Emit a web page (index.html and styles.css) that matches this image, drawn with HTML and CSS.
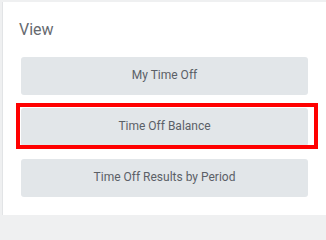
FILE: index.html
```html
<!DOCTYPE html>
<html>
<head>
<meta charset="utf-8">
<link rel="stylesheet" href="styles.css">
</head>
<body>
<div class="card">
  <h2 class="title">View</h2>
  <div class="list">
    <button class="btn">My Time Off</button>
    <button class="btn">Time Off Balance</button>
    <button class="btn">Time Off Results by Period</button>
  </div>
  <div class="highlight"></div>
</div>
</body>
</html>
```

FILE: styles.css
```css
html, body {
  margin: 0;
  padding: 0;
}
body {
  background: #eff0f1;
  padding-top: 2px;
  width: 326px;
  height: 220px;
  overflow: hidden;
  box-sizing: border-box;
  font-family: Roboto, "Liberation Sans", sans-serif;
}
.card {
  position: relative;
  margin-left: 2px;
  border-left: 1px solid #e2e4e6;
  background: #ffffff;
  height: 213px;
  box-sizing: border-box;
  padding: 18px 0 0 16px;
}
.title {
  margin: 0;
  font-size: 16px;
  line-height: 20px;
  font-weight: 400;
  color: #666a70;
}
.list {
  margin-top: 17px;
  margin-left: 2px;
  display: flex;
  flex-direction: column;
  gap: 13px;
}
.btn {
  width: 287px;
  height: 38px;
  border: none;
  border-radius: 3px;
  background: #e2e6e9;
  color: #5b6067;
  font-family: Roboto, "Liberation Sans", sans-serif;
  font-size: 12px;
  padding: 0;
  padding-bottom: 3px;
}
.highlight {
  position: absolute;
  left: 13px;
  top: 101px;
  width: 302px;
  height: 46px;
  border: 4px solid #ff0000;
  box-sizing: border-box;
}
```
